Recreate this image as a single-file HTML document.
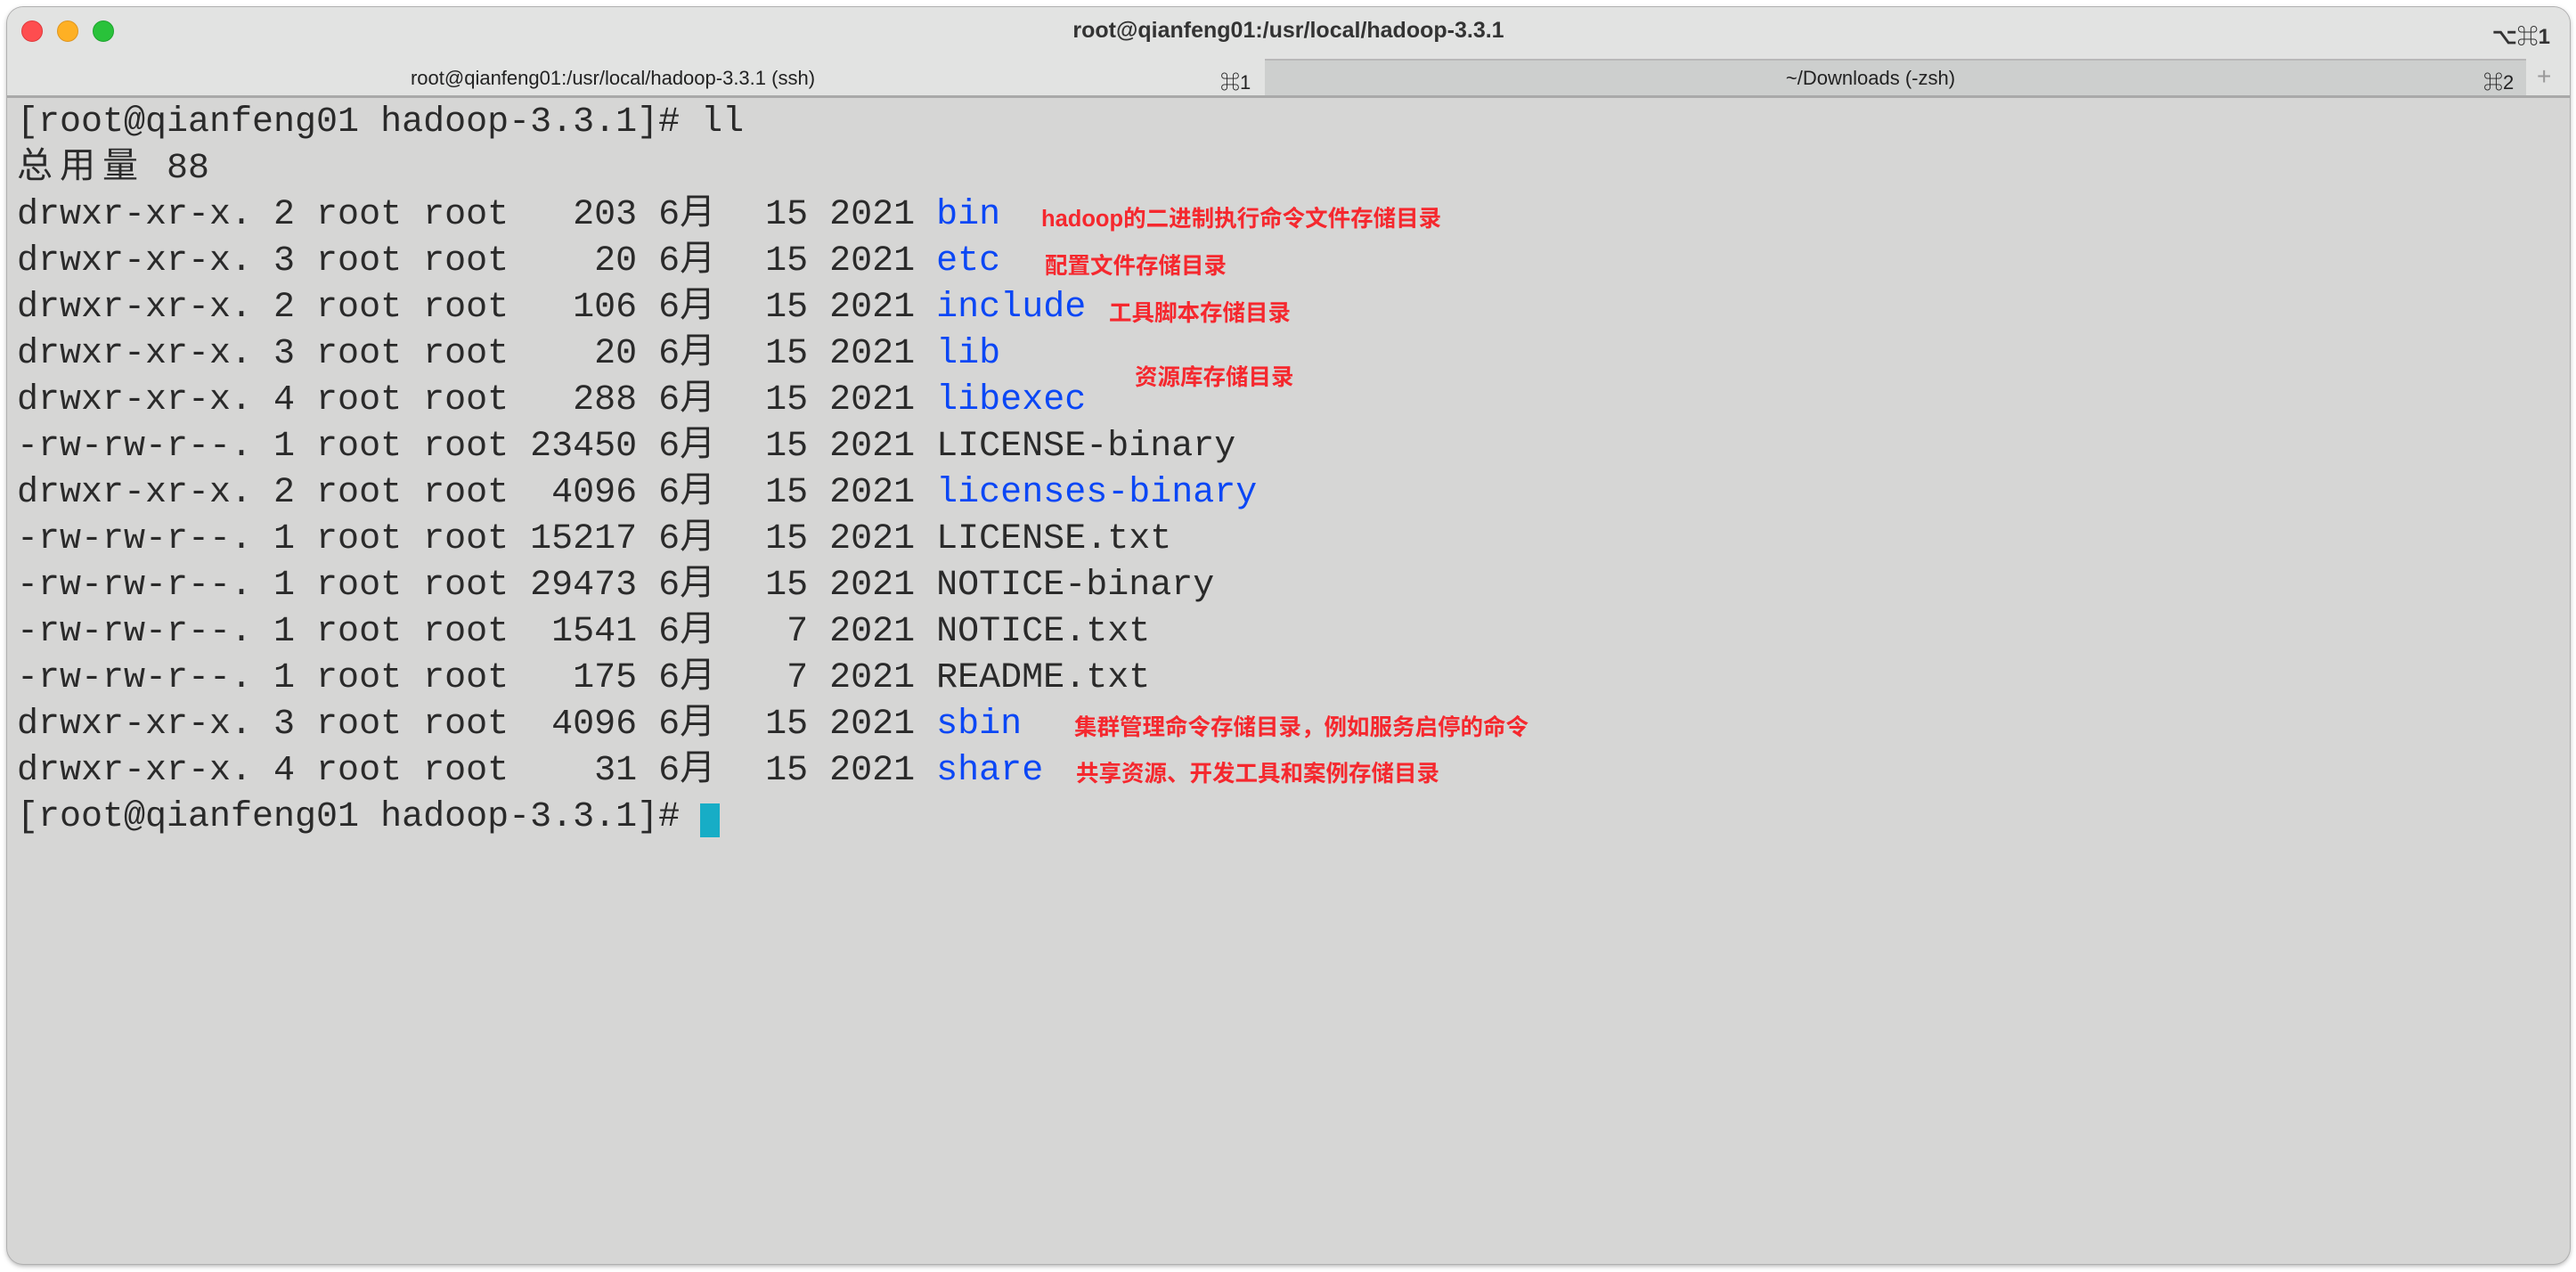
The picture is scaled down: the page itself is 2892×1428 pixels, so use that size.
<!DOCTYPE html>
<html><head><meta charset="utf-8"><style>
*{margin:0;padding:0;box-sizing:border-box}
body{width:2892px;height:1428px;background:#fff;position:relative;overflow:hidden;font-family:"Liberation Sans","Noto Sans CJK SC",sans-serif}
.win{position:absolute;left:8px;top:8px;width:2877px;height:1411px;border-radius:18px;overflow:hidden;background:#d6d6d5;box-shadow:0 0 0 1px #b0b0b0,0 2px 6px rgba(0,0,0,.35)}
.title{position:absolute;left:0;top:0;width:100%;height:58px;background:#e2e3e2}
.dot{position:absolute;top:15px;width:24px;height:24px;border-radius:50%}
.ttl{position:absolute;top:12px;left:0;width:100%;text-align:center;font-weight:bold;font-size:25px;color:#333}
.ttr{position:absolute;top:13px;right:22px;font-weight:bold;font-size:24px;color:#333}
.tabs{position:absolute;left:0;top:58px;width:100%;height:44px;background:#e2e3e2;border-bottom:3px solid #a9a9a9}
.tab2{position:absolute;left:1412px;top:0;width:1416px;height:41px;background:#cdcfce;border-top:2px solid #b8b8b8}
.tt{position:absolute;top:9px;font-size:22px;color:#222}
.term{position:absolute;left:11px;top:104px;font-family:"Liberation Mono","Noto Sans CJK SC",monospace;font-size:40px;line-height:52px;color:#2a2a2a;white-space:pre}
.c{display:inline-block;width:1.2em;text-align:left}
.b{color:#0b47f5}
.n{position:absolute;color:#f5282e;font-weight:bold;font-size:25.5px;font-family:"Liberation Sans","Noto Sans CJK SC",sans-serif;white-space:nowrap}
.cur{position:absolute;left:778px;top:894px;width:22px;height:38px;background:#17adc6}
</style></head><body>
<div class="win">
 <div class="title">
  <div class="dot" style="left:16px;background:#fe4d4f;border:1px solid #e0393c"></div>
  <div class="dot" style="left:56px;background:#feb024;border:1px solid #df9620"></div>
  <div class="dot" style="left:96px;background:#29c23a;border:1px solid #1fa42f"></div>
  <div class="ttl">root@qianfeng01:/usr/local/hadoop-3.3.1</div>
  <div class="ttr">⌥⌘1</div>
 </div>
 <div class="tabs">
  <div class="tt" style="left:0;width:1360px;text-align:center">root@qianfeng01:/usr/local/hadoop-3.3.1 (ssh)</div>
  <div class="tt" style="left:1362px">⌘1</div>
  <div class="tab2">
   <div class="tt" style="left:0;width:1360px;text-align:center;top:7px">~/Downloads (-zsh)</div>
   <div class="tt" style="left:1368px;top:7px">⌘2</div>
  </div>
  <div class="tt" style="left:2840px;top:4px;color:#999;font-size:28px">+</div>
 </div>
 <div class="term">[root@qianfeng01 hadoop-3.3.1]# ll
<span class="c">总</span><span class="c">用</span><span class="c">量</span> 88
drwxr-xr-x. 2 root root   203 6<span class="c">月</span>  15 2021 <span class="b">bin</span>
drwxr-xr-x. 3 root root    20 6<span class="c">月</span>  15 2021 <span class="b">etc</span>
drwxr-xr-x. 2 root root   106 6<span class="c">月</span>  15 2021 <span class="b">include</span>
drwxr-xr-x. 3 root root    20 6<span class="c">月</span>  15 2021 <span class="b">lib</span>
drwxr-xr-x. 4 root root   288 6<span class="c">月</span>  15 2021 <span class="b">libexec</span>
-rw-rw-r--. 1 root root 23450 6<span class="c">月</span>  15 2021 LICENSE-binary
drwxr-xr-x. 2 root root  4096 6<span class="c">月</span>  15 2021 <span class="b">licenses-binary</span>
-rw-rw-r--. 1 root root 15217 6<span class="c">月</span>  15 2021 LICENSE.txt
-rw-rw-r--. 1 root root 29473 6<span class="c">月</span>  15 2021 NOTICE-binary
-rw-rw-r--. 1 root root  1541 6<span class="c">月</span>   7 2021 NOTICE.txt
-rw-rw-r--. 1 root root   175 6<span class="c">月</span>   7 2021 README.txt
drwxr-xr-x. 3 root root  4096 6<span class="c">月</span>  15 2021 <span class="b">sbin</span>
drwxr-xr-x. 4 root root    31 6<span class="c">月</span>  15 2021 <span class="b">share</span>
[root@qianfeng01 hadoop-3.3.1]# </div>
 <div class="cur"></div>
 <div class="n" style="left:1161px;top:217px">hadoop的二进制执行命令文件存储目录</div>
 <div class="n" style="left:1165px;top:270px">配置文件存储目录</div>
 <div class="n" style="left:1237px;top:323px">工具脚本存储目录</div>
 <div class="n" style="left:1266px;top:395px">资源库存储目录</div>
 <div class="n" style="left:1198px;top:788px">集群管理命令存储目录，例如服务启停的命令</div>
 <div class="n" style="left:1200px;top:840px">共享资源、开发工具和案例存储目录</div>
</div>
</body></html>
